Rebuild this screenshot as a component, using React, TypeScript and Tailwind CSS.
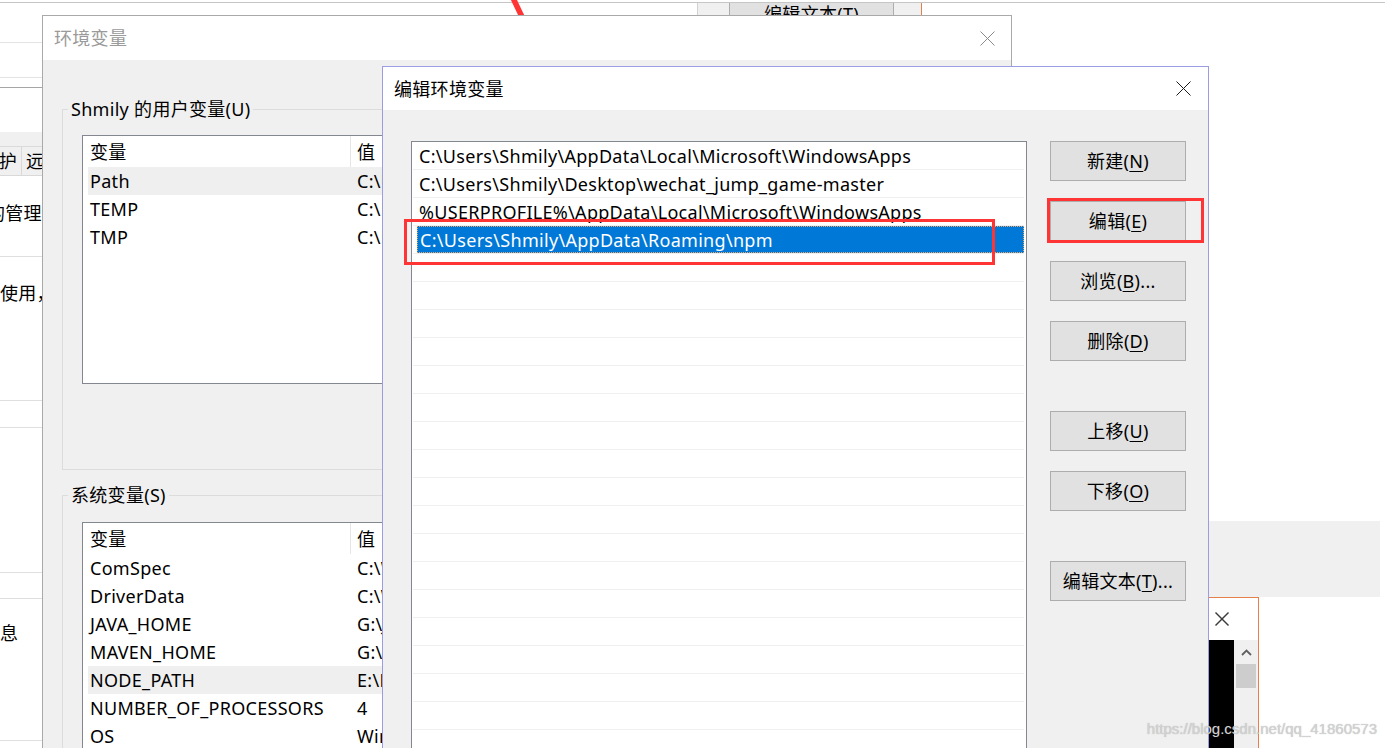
import React from 'react';

const CloseX = ({ size = 15, color = '#000', width = 1 }: { size?: number; color?: string; width?: number }) => (
  <svg width={size} height={size} viewBox={`0 0 ${size} ${size}`} className="shrink-0">
    <line x1="0.5" y1="0.5" x2={size - 0.5} y2={size - 0.5} stroke={color} strokeWidth={width} />
    <line x1={size - 0.5} y1="0.5" x2="0.5" y2={size - 0.5} stroke={color} strokeWidth={width} />
  </svg>
);

const Btn = ({ label, mn, tail = '', className = '' }: { label: string; mn: string; tail?: string; className?: string }) => (
  <div
    className={`h-[40px] w-[136px] border border-[#adadad] bg-[#e1e1e1] flex items-center justify-center text-[18px] leading-none ${className}`}
  >
    <span>
      {label}(<span className="underline underline-offset-[3px] decoration-1">{mn}</span>){tail}
    </span>
  </div>
);

type VarRow = { name: string; value: string; hover?: boolean };

const userVars: VarRow[] = [
  { name: 'Path', value: 'C:\\Users\\Shmily\\AppData\\Local\\Microsoft\\WindowsApps', hover: true },
  { name: 'TEMP', value: 'C:\\Users\\Shmily\\AppData\\Local\\Temp' },
  { name: 'TMP', value: 'C:\\Users\\Shmily\\AppData\\Local\\Temp' },
];

const sysVars: VarRow[] = [
  { name: 'ComSpec', value: 'C:\\WINDOWS\\system32\\cmd.exe' },
  { name: 'DriverData', value: 'C:\\Windows\\System32\\Drivers\\DriverData' },
  { name: 'JAVA_HOME', value: 'G:\\Java\\jdk1.8.0_181' },
  { name: 'MAVEN_HOME', value: 'G:\\apache-maven-3.5.4' },
  { name: 'NODE_PATH', value: 'E:\\Program Files\\nodejs\\node_modules', hover: true },
  { name: 'NUMBER_OF_PROCESSORS', value: '4' },
  { name: 'OS', value: 'Windows_NT' },
];

const pathEntries = [
  'C:\\Users\\Shmily\\AppData\\Local\\Microsoft\\WindowsApps',
  'C:\\Users\\Shmily\\Desktop\\wechat_jump_game-master',
  '%USERPROFILE%\\AppData\\Local\\Microsoft\\WindowsApps',
  'C:\\Users\\Shmily\\AppData\\Roaming\\npm',
];

function VarList({ rows, height }: { rows: VarRow[]; height: string }) {
  return (
    <div className={`ml-[19px] w-[900px] ${height} border border-[#828790] bg-white overflow-hidden`}>
      <div className="flex h-[31px] items-stretch">
        <div className="w-[268px] pl-[7px] border-r border-[#e5e5e5] flex items-center">变量</div>
        <div className="pl-[6px] flex items-center">值</div>
      </div>
      {rows.map((r) => (
        <div key={r.name} className={`ml-[5px] flex h-[28px] items-center ${r.hover ? 'bg-[#efefef]' : ''}`}>
          <div className="w-[262px] pl-[2px] whitespace-nowrap">{r.name}</div>
          <div className="pl-[7px] whitespace-nowrap">{r.value}</div>
        </div>
      ))}
    </div>
  );
}

// the System Properties window sitting behind everything, only its left strip shows
function BackWindow() {
  return (
    <div className="absolute left-0 top-0 w-[400px] h-[748px] bg-white text-[18px] leading-[24px]">
      <div className="h-[43px] border-b border-[#e3e3e3]" />
      <div className="h-[35px] border-b border-[#e3e3e3]" />
      <div className="h-[10px] border-b border-[#a6a6a6]" />
      <div className="h-[44px]" />
      <div className="h-[44px] bg-[#f0f0f0] border-b border-[#d9d9d9] flex items-end">
        <div className="h-[29px] flex border-t border-[#dadada]">
          <div className="w-[22px] border-r border-[#d9d9d9] flex items-center justify-end pr-[4px] whitespace-nowrap">
            护
          </div>
          <div className="pl-[4px] flex items-center whitespace-nowrap">远程</div>
        </div>
      </div>
      <div className="h-[81px] border-b border-[#dfdfdf] pt-[25px] whitespace-nowrap -ml-[13px]">的管理员登录。</div>
      <div className="h-[144px] border-b border-[#dfdfdf] pt-[24px] whitespace-nowrap">使用，以及虚拟内存</div>
      <div className="h-[27px] border-b border-[#dfdfdf]" />
      <div className="h-[145px] border-b border-[#dfdfdf]" />
      <div className="h-[26px] border-b border-[#dfdfdf]" />
      <div className="h-[142px] border-b border-[#dfdfdf] pt-[22px] whitespace-nowrap">息</div>
    </div>
  );
}

export default function App() {
  return (
    <div className="relative w-[1385px] h-[748px] overflow-hidden bg-white text-black tracking-[0.3px] font-['Noto_Sans','Noto_Sans_CJK_SC',sans-serif]">
      <BackWindow />

      {/* partly hidden edit dialog from an earlier step */}
      <div className="absolute left-[697px] top-[3px] w-[225px] h-[12px] overflow-hidden bg-[#f0f0f0] border-l border-r border-l-[#d2d2d2] border-r-[#e3804f]">
        <div className="ml-[31px] -mt-[9px] w-[165px] h-[40px] bg-[#e1e1e1] border border-[#adadad] flex items-center justify-center text-[18px] leading-none">
          编辑文本(T)
        </div>
      </div>
      <div className="absolute left-0 right-0 top-[2px] h-px bg-[#c6c6c6]" />
      <svg className="absolute left-[505px] top-0" width="25" height="17" viewBox="0 0 25 17">
        <line x1="8" y1="-2" x2="18" y2="19" stroke="#ff3434" strokeWidth="5.5" />
      </svg>

      {/* right side background pieces */}
      <div className="absolute left-[1209px] top-[521px] w-[171px] h-[76px] bg-[#f0f0f0]" />
      <div className="absolute left-[1209px] top-[597px] w-[50px] h-[160px] bg-white border-t border-r border-[#e5804d] flex flex-col">
        <div className="h-[42px] flex items-center pl-[6px]">
          <CloseX size={14} color="#3a3a3a" width={1.4} />
        </div>
        <div className="flex flex-1">
          <div className="w-[25px] bg-black" />
          <div className="w-[24px] bg-[#f0f0f0] flex flex-col items-center">
            <svg className="mt-[9px]" width="11" height="7" viewBox="0 0 11 7">
              <polyline points="1,6 5.5,1.5 10,6" fill="none" stroke="#606060" strokeWidth="1.8" />
            </svg>
            <div className="mt-[8px] w-[20px] h-[24px] bg-[#cdcdcd]" />
          </div>
        </div>
      </div>

      {/* 环境变量 window (inactive) */}
      <div className="absolute left-[42px] top-[15px] w-[970px] h-[760px] border border-[#a9a9a9] bg-[#f0f0f0] flex flex-col text-[18px] leading-[24px]">
        <div className="h-[44px] bg-white flex items-center justify-between pl-[11px] pr-[16px] shrink-0">
          <span className="text-[#9a9a9a]">环境变量</span>
          <CloseX size={15} color="#8a8a8a" />
        </div>
        <div className="flex-1 pl-[19px] pr-[20px] pt-[37px]">
          <fieldset className="h-[373px] border border-[#dcdcdc]">
            <legend className="ml-[5px] px-[3px]">Shmily 的用户变量(U)</legend>
            <div className="mt-[14px]">
              <VarList rows={userVars} height="h-[249px]" />
            </div>
          </fieldset>
          <fieldset className="mt-[13px] h-[320px] border border-[#dcdcdc]">
            <legend className="ml-[5px] px-[3px]">系统变量(S)</legend>
            <div className="mt-[15px]">
              <VarList rows={sysVars} height="h-[300px]" />
            </div>
          </fieldset>
        </div>
      </div>

      {/* 编辑环境变量 dialog (active) */}
      <div className="absolute left-[382px] top-[66px] w-[827px] h-[700px] border border-[#9c9ce2] bg-[#f0f0f0] flex flex-col text-[18px] leading-[24px]">
        <div className="h-[43px] bg-white flex items-center justify-between pl-[11px] pr-[17px] shrink-0">
          <span>编辑环境变量</span>
          <CloseX size={15} color="#1a1a1a" />
        </div>
        <div className="flex flex-1 pt-[31px] pl-[28px] gap-[23px]">
          <div className="w-[616px] h-[700px] border border-[#828790] bg-white overflow-hidden">
            {Array.from({ length: 22 }).map((_, i) => {
              const text = pathEntries[i];
              const selected = i === 3;
              return (
                <div key={i} className="h-[28px] ml-[1px] mr-[2px] border-b border-[#efefef]">
                  {selected ? (
                    <div className="ml-[4px] h-full bg-[#0078d7] text-white pl-[2px] flex items-center whitespace-nowrap border border-dotted border-[#e9a86a]">
                      {text}
                    </div>
                  ) : (
                    <div className="h-full pl-[6px] flex items-center whitespace-nowrap">{text ?? ''}</div>
                  )}
                </div>
              );
            })}
          </div>
          <div className="flex flex-col">
            <Btn label="新建" mn="N" />
            <Btn label="编辑" mn="E" className="mt-[20px]" />
            <Btn label="浏览" mn="B" tail="..." className="mt-[20px]" />
            <Btn label="删除" mn="D" className="mt-[20px]" />
            <Btn label="上移" mn="U" className="mt-[50px]" />
            <Btn label="下移" mn="O" className="mt-[20px]" />
            <Btn label="编辑文本" mn="T" tail="..." className="mt-[50px]" />
          </div>
        </div>
      </div>

      {/* red annotation boxes */}
      <div className="absolute left-[404px] top-[219px] w-[591px] h-[46px] border-[3px] border-[#ff3535]" />
      <div className="absolute left-[1047px] top-[198px] w-[157px] h-[45px] border-[3px] border-[#ff3535]" />

      <div className="absolute right-[8px] top-[719px] text-[15px] leading-[20px] tracking-normal text-[#d2d2d2] font-['Liberation_Sans',sans-serif] whitespace-nowrap [text-shadow:0_0_1px_rgba(120,120,120,0.5)]">
        https://blog.csdn.net/qq_41860573
      </div>
    </div>
  );
}
